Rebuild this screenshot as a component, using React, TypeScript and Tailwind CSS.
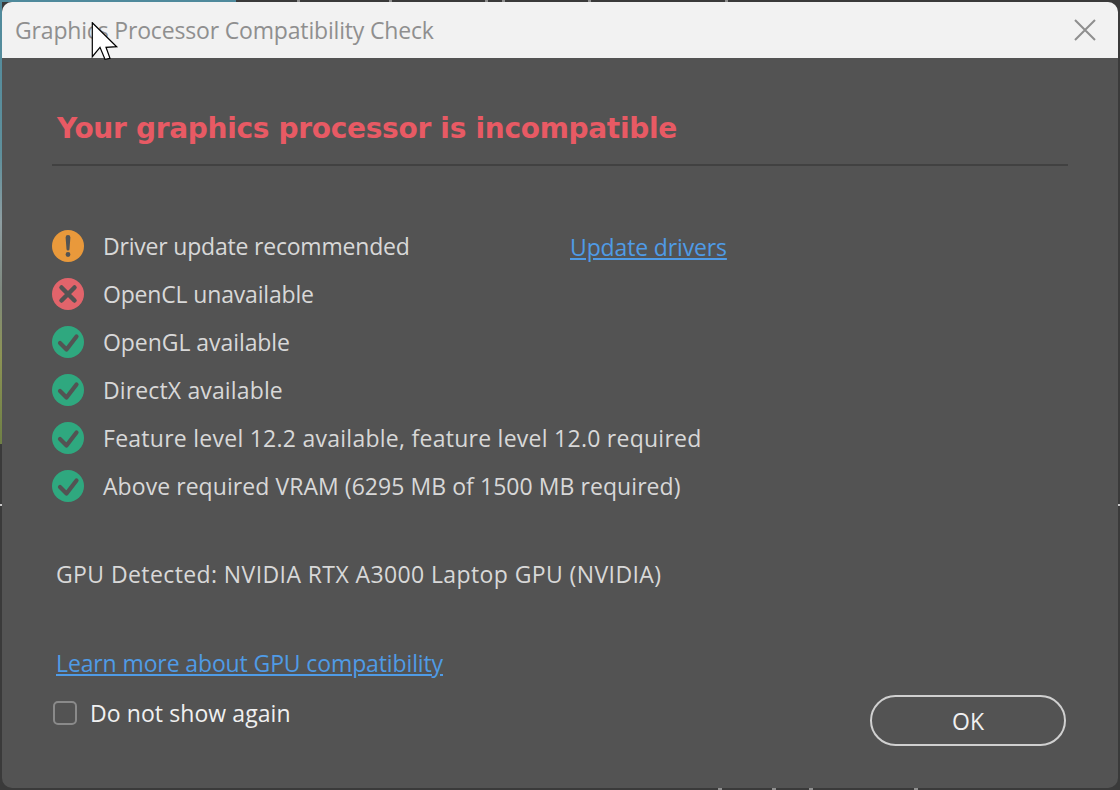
import React from "react";

const font = { fontFamily: '"Open Sans", sans-serif' };

function Status({ kind }: { kind: "warn" | "err" | "ok" }) {
  const fill = kind === "warn" ? "#e9993b" : kind === "err" ? "#e2646b" : "#2fa87f";
  return (
    <svg width="32" height="32" viewBox="0 0 32 32" className="shrink-0">
      <circle cx="16" cy="16" r="16" fill={fill} />
      {kind === "warn" && (
        <>
          <path d="M13.6 7.5a2.4 2.4 0 0 1 4.8 0l-.9 11.500a1.500 1.500 0 0 1-3 0z" fill="#535353" />
          <circle cx="16" cy="24.500" r="2.400" fill="#535353" />
        </>
      )}
      {kind === "err" && <path d="M9.5 9.5l13 13M22.5 9.5l-13 13" stroke="#535353" strokeWidth="4.500" strokeLinecap="round" />}
      {kind === "ok" && <path d="M8 17l6.500 6.500 10-13" fill="none" stroke="#535353" strokeWidth="4.200" strokeLinecap="round" strokeLinejoin="round" />}
    </svg>
  );
}

const rows: { kind: "warn" | "err" | "ok"; text: string; track: string; link?: string }[] = [
  { kind: "warn", text: "Driver update recommended", track: "tracking-[-0.2px]", link: "Update drivers" },
  { kind: "err", text: "OpenCL unavailable", track: "tracking-[-0.17px]" },
  { kind: "ok", text: "OpenGL available", track: "tracking-[-0.06px]" },
  { kind: "ok", text: "DirectX available", track: "tracking-[0.14px]" },
  { kind: "ok", text: "Feature level 12.2 available, feature level 12.0 required", track: "tracking-[0.26px]" },
  { kind: "ok", text: "Above required VRAM (6295 MB of 1500 MB required)", track: "tracking-[0.06px]" },
];

const topTicks = [297, 389, 485, 502, 588, 725];
const bottomTicks = [718, 772, 809, 914];

export default function App() {
  return (
    <div className="w-[1120px] h-[790px] overflow-hidden bg-[#3a3a3a] relative" style={font}>
      <div className="absolute left-0 top-0 w-[236px] h-[2px] bg-[#4f8a9c]" />
      <div className="absolute left-0 top-0 w-[2px] h-[444px] bg-[linear-gradient(180deg,#4f8a9c_0%,#5f909c_35%,#8e9ea2_50%,#7f8a80_65%,#8d9455_80%,#6f8045_100%)]" />
      {topTicks.map((x) => (
        <div key={x} className="absolute top-0 w-[3px] h-[2px] bg-[#8f8f8f]" style={{ left: x }} />
      ))}
      {bottomTicks.map((x) => (
        <div key={x} className="absolute bottom-0 w-[4px] h-[2px] bg-[#8f8f8f]" style={{ left: x }} />
      ))}
      <div className="absolute left-0 top-[504px] w-[2px] h-[2px] bg-[#c8c8c8]" />
      <div className="absolute right-0 top-[504px] w-[2px] h-[2px] bg-[#c8c8c8]" />
      <div className="absolute inset-x-[2px] top-[2px] h-[786px] rounded-[10px] overflow-hidden bg-[#535353] flex flex-col">
        <div className="h-[56px] shrink-0 bg-[#f2f2f2] flex items-center justify-between pl-[13px] pr-[22px]">
          <span className="text-[23px] tracking-[-0.17px] text-[#8f8f8f]">Graphics Processor Compatibility Check</span>
          <svg width="22" height="22" viewBox="0 0 22 22"><path d="M1 1l20 20M21 1L1 21" stroke="#8f8f8f" strokeWidth="2" /></svg>
        </div>
        <div className="px-[50px] flex-1 flex flex-col">
          <h1
            className="mt-[51px] ml-[5px] text-[28px] tracking-[-0.3px] leading-[40px] font-bold text-[#e85a64] whitespace-nowrap"
            style={{ fontFamily: '"DejaVu Sans", sans-serif' }}
          >
            Your graphics processor is incompatible
          </h1>
          <div className="mt-[15px] h-[2px] bg-[#414141]" />
          <div className="mt-[64px] flex flex-col gap-[16px]">
            {rows.map((r) => (
              <div key={r.text} className="flex items-center h-[32px]">
                <Status kind={r.kind} />
                <span className={`ml-[19px] w-[467px] text-[23px] whitespace-nowrap text-[#d8d8d8] ${r.track}`}>{r.text}</span>
                {r.link && <a className="pt-[2px] text-[23px] tracking-[-0.14px] text-[#4f9be6] underline">{r.link}</a>}
              </div>
            ))}
          </div>
          <div className="mt-[57px] ml-[4px] text-[23px] tracking-[0.4px] leading-[30px] text-[#d8d8d8]">GPU Detected: NVIDIA RTX A3000 Laptop GPU (NVIDIA)</div>
          <a className="mt-[59px] ml-[4px] text-[23px] tracking-[-0.12px] leading-[30px] text-[#4f9be6] underline">Learn more about GPU compatibility</a>
          <div className="flex justify-between items-start">
            <div className="mt-[20px] flex items-center">
              <div className="ml-[1px] w-[24px] h-[24px] rounded-[5px] border-2 border-[#8a8a8a]" />
              <span className="ml-[13px] text-[23px] tracking-[0.08px] leading-[30px] text-[#f0f0f0]">Do not show again</span>
            </div>
            <button className="mt-[17px] mr-[2px] w-[196px] h-[51px] pt-[1px] rounded-full border-2 border-[#d0d0d0] text-[23px] text-[#f0f0f0]">OK</button>
          </div>
        </div>
      </div>
      <svg className="absolute left-[90px] top-[22px]" width="30" height="40" viewBox="0 0 30 40">
        <path d="M2.300.7L26.700 24.700 16 25.300 20 36.300 15 37.300 10 25.300 2.300 34.700z" fill="#fff" stroke="#000" strokeWidth="1.200" />
      </svg>
    </div>
  );
}
